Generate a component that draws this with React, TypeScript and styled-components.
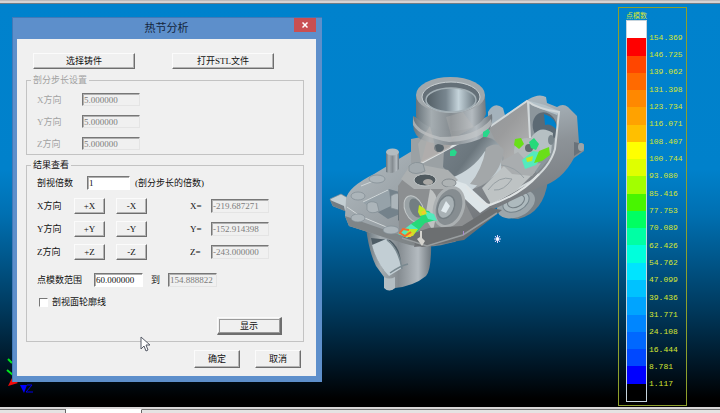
import React from 'react';
import styled, { createGlobalStyle, css } from 'styled-components';

const GlobalStyle = createGlobalStyle`
  * { box-sizing: border-box; }
  body { margin: 0; background: #000; }
  body, button, input {
    font-family: 'Liberation Serif', 'Noto Sans CJK SC', serif;
    font-size: 9px;
    line-height: 12px;
    color: #111;
  }
`;

const Page = styled.div`
  display: flex;
  flex-direction: column;
  height: 100vh;
  min-height: 400px;
  overflow: hidden;
`;

const TopEdge = styled.div`
  flex: none;
  height: 4px;
  background: linear-gradient(#bdbabb 0 1px, #d6d3d3 1px 3px, #6f7c86 3px);
`;

const Scene = styled.main`
  position: relative;
  flex: 1;
  min-height: 0;
  background: linear-gradient(#0082cd 0, #0081cb 41%, #0070b2 52%, #005588 64%, #003658 77%, #00121f 91%, #000 98%);
`;

const TabStrip = styled.nav`
  flex: none;
  display: flex;
  height: 6px;
  border-top: 2px solid #d8d6d6;
  background: #eceaea;
`;

const Tab = styled.span<{ $active?: boolean; $grow?: boolean }>`
  width: ${p => (p.$active ? '76px' : '66px')};
  ${p => p.$grow && css`flex: 1;`}
  border-top: 1px solid ${p => (p.$active ? '#fff' : '#777')};
  border-right: ${p => (p.$grow ? '0' : '1px')} solid #666;
  background: ${p => (p.$active ? '#fff' : '#e5e3e3')};
`;

/* Dialog */

const Dialog = styled.section`
  position: absolute;
  left: 12px;
  top: 13px;
  width: 310px;
  padding: 0 6px 6px 4px;
  background: #5d8fcb;
  border: 1px solid #4279b8;
  border-width: 1px 0 0 1px;
`;

const TitleBar = styled.header`
  display: grid;
  grid-template-columns: 22px 1fr 22px;
  height: 21px;
`;

const Title = styled.h1`
  grid-column: 2;
  margin: 0;
  text-align: center;
  font: 400 11px/19px 'Noto Sans CJK SC', sans-serif;
  color: #14253c;
`;

const CloseButton = styled.button`
  display: grid;
  place-items: center;
  height: 14px;
  padding: 0;
  border: 0;
  background: #c94f52;
`;

const Body = styled.form`
  display: flex;
  flex-direction: column;
  padding: 14px 12px 8px 9px;
  background: #f0f0f0;
`;

const raised = css`
  border: 1px solid;
  border-color: #fbfbfb #6e6e6e #6e6e6e #fbfbfb;
  box-shadow: inset -1px -1px #b4b4b4;
`;

const Button = styled.button<{ $w: number; $h?: number; $default?: boolean }>`
  width: ${p => p.$w}px;
  height: ${p => p.$h ?? 16}px;
  padding: 0;
  line-height: 12px;
  background: #f0f0f0;
  ${raised}
  ${p => p.$default && css`
    outline: 1px solid #999;
    outline-offset: -3px;
    border-width: 1px 2px 2px 1px;
  `}
`;

const FileRow = styled.div`
  display: flex;
  gap: 37px;
  padding-left: 7px;
  margin-bottom: 5px;
`;

const Group = styled.fieldset<{ $muted?: boolean }>`
  display: flex;
  flex-direction: column;
  gap: 9px;
  min-width: 0;
  margin: 0 0 4px;
  padding: 7px 8px 4px 10px;
  border: 1px solid #c3c3c3;
  color: ${p => (p.$muted ? '#a2a2a2' : '#111')};
`;

const ResultGroup = styled(Group)`
  gap: 0;
  margin-bottom: 8px;
  padding-top: 5px;
`;

const Legend = styled.legend`
  margin-left: -6px;
  padding: 0 2px;
  line-height: 12px;
`;

const Row = styled.div<{ $after?: number }>`
  display: flex;
  align-items: center;
  margin-bottom: ${p => p.$after ?? 0}px;
`;

const Axes = styled.div`
  display: flex;
  flex-direction: column;
  gap: 7px;
  margin-bottom: 13px;
`;

const Label = styled.label<{ $w: number; $pad?: number }>`
  width: ${p => p.$w}px;
  padding-left: ${p => p.$pad ?? 0}px;
  flex: none;
  white-space: nowrap;
`;

const Name = styled.span<{ $w: number; $pad?: number }>`
  width: ${p => p.$w}px;
  padding-left: ${p => p.$pad ?? 0}px;
  flex: none;
  white-space: nowrap;
`;

const Field = styled.input<{ $w: number }>`
  width: ${p => p.$w}px;
  height: 14px;
  padding: 0 0 0 1px;
  border: 1px solid;
  border-color: #777 #fff #fff #777;
  box-shadow: inset 1px 1px #b0b0b0;
  border-radius: 0;
  background: #fff;
  line-height: 12px;
  &:disabled { background: #f0f0f0; color: #7c7c7c; border-color: #777 #e4e4e4 #e4e4e4 #777; }
`;

const StepField = styled(Field)`
  height: 13px;
`;

const Pair = styled.div`
  display: flex;
  gap: 11px;
  width: 116px;
`;

const Check = styled.input`
  appearance: none;
  width: 9px;
  height: 9px;
  margin: 0 4px 0 2px;
  border: 1px solid;
  border-color: #777 #fff #fff #777;
  background: #fff;
`;

const ShowRow = styled(Row)`
  justify-content: flex-end;
  padding-right: 13px;
  margin-bottom: 2px;
`;

const Footer = styled.footer`
  display: flex;
  justify-content: flex-end;
  gap: 15px;
  padding-right: 3px;
`;

/* Colour scale */

const Scale = styled.aside`
  position: absolute;
  top: 3px;
  right: 33px;
  bottom: 1px;
  width: 69px;
  display: flex;
  flex-direction: column;
  padding: 2px 2px 3px 7px;
  border: 1px solid #8e9f2c;
  color: #d6e632;
`;

const ScaleTitle = styled.h2`
  margin: 0;
  font: 400 7px/10px 'Noto Sans CJK SC', sans-serif;
`;

const ScaleBody = styled.div`
  flex: 1;
  display: flex;
  gap: 2px;
  min-height: 0;
`;

const Swatches = styled.div`
  display: flex;
  flex-direction: column;
  width: 21px;
  border: 1px solid #c6d4dd;
`;

const Swatch = styled.i<{ $c: string }>`
  flex: 1;
  background: ${p => p.$c};
`;

const Ticks = styled.ol`
  display: flex;
  flex-direction: column;
  margin: 9px 0;
  padding: 0;
  list-style: none;
  font: 8px/8px 'Liberation Mono', monospace;
`;

const Tick = styled.li`
  flex: 1;
  display: flex;
  align-items: center;
`;

/* Drawings lying on the canvas */

const Model = styled.svg`
  position: absolute;
  left: 325px;
  top: 66px;
  width: 265px;
  height: 230px;
`;

const Triad = styled.svg`
  position: absolute;
  left: 4px;
  top: 352px;
  width: 36px;
  height: 40px;
`;

const Pointer = styled.svg`
  position: absolute;
  left: 139px;
  top: 332px;
  width: 13px;
  height: 16px;
`;

const COLORS = [
  '#ffffff', '#ff0000', '#ff4600', '#ff6a00', '#ff8800', '#ffa200', '#ffbf00', '#ffff00',
  '#dfff00', '#a2ff00', '#48f500', '#00ff62', '#00ffa4', '#00ffdc', '#00e4ff', '#00c2ff',
  '#00a4ff', '#0086ff', '#0068ff', '#0048ff', '#0000ff', '#000000',
];

const VALUES = [
  '154.369', '146.725', '139.062', '131.398', '123.734', '116.071', '108.407',
  '100.744', '93.080', '85.416', '77.753', '70.089', '62.426', '54.762',
  '47.099', '39.436', '31.771', '24.108', '16.444', '8.781', '1.117',
];

const AXES = [
  { axis: 'X', value: '-219.687271' },
  { axis: 'Y', value: '-152.914398' },
  { axis: 'Z', value: '-243.000000' },
];

function Casting() {
  return (
    <Model viewBox="325 70 265 230" role="img" aria-label="铸件">
      <defs>
        <linearGradient id="tube">
          <stop offset="0" stopColor="#69747b" />
          <stop offset=".22" stopColor="#a5adb1" />
          <stop offset=".5" stopColor="#858c91" />
          <stop offset=".8" stopColor="#b4bbc0" />
          <stop offset="1" stopColor="#70787e" />
        </linearGradient>
        <linearGradient id="bore">
          <stop offset="0" stopColor="#525e65" />
          <stop offset=".4" stopColor="#78868f" />
          <stop offset=".65" stopColor="#c4d3da" />
          <stop offset="1" stopColor="#68757d" />
        </linearGradient>
        <linearGradient id="plate" x2="1" y2="1">
          <stop offset="0" stopColor="#b4bdc2" />
          <stop offset=".5" stopColor="#9aa2a7" />
          <stop offset="1" stopColor="#84898d" />
        </linearGradient>
        <linearGradient id="wall" x2="1" y2="1">
          <stop offset="0" stopColor="#8a9298" />
          <stop offset=".5" stopColor="#9b9c9d" />
          <stop offset="1" stopColor="#c4c5c5" />
        </linearGradient>
        <linearGradient id="side" y2="1" x2=".2">
          <stop offset="0" stopColor="#bac8d0" />
          <stop offset=".45" stopColor="#8d9398" />
          <stop offset="1" stopColor="#6c6f73" />
        </linearGradient>
        <linearGradient id="hollow" x2="1" y2=".6">
          <stop offset="0" stopColor="#77828a" />
          <stop offset=".5" stopColor="#6b767d" />
          <stop offset="1" stopColor="#c3cdd2" />
        </linearGradient>
      </defs>

      {/* lower pipes */}
      <path fill="url(#tube)" d="M366 228 Q369 252 376 266 L384 277 V287 Q389 293 395 288 Q414 286 426 276 Q432 270 431 236Z" />
      <path fill="#4e5c65" d="M371 238 Q374 257 384 270 L400 268 Q403 250 390 240Z" />
      <path fill="#c2ced4" d="M372 245 L386 239 Q397 245 402 268 L389 276 Q377 264 372 245Z" />
      <path fill="none" stroke="#7a8990" strokeWidth="1.500" d="M387 240 Q399 249 402 269 M390 273 Q400 266 408 264" />
      <path fill="#b4bec3" d="M384 277 Q389 280 395 277 V288 Q389 293 384 288Z" />
      <path fill="#788187" d="M498 208 Q505 219 518 219 Q544 213 548 180 L515 178Z" />
      <ellipse cx="516" cy="204" rx="20" ry="13" fill="#9ca6ab" transform="rotate(-25 516 204)" />
      <ellipse cx="516" cy="202" rx="14" ry="9" fill="#aebabe" stroke="#75838a" transform="rotate(-28 516 202)" />
      <ellipse cx="516" cy="201" rx="9" ry="6" fill="none" stroke="#737e84" transform="rotate(-28 516 201)" />

      {/* base plate */}
      <path fill="#c3ced3" stroke="#7b8a93" strokeWidth=".7" d="M330 199 L341 194 L348 198 L352 206 L346 211 L333 206Z" />
      <path fill="#737d84" d="M330 200 L344 206 L345 211 L333 206Z" />
      <path fill="url(#plate)" d="M346 199 Q348 187 374 174 L412 151 L440 157 L455 239 Q430 252 396 241 L349 226 L345 216Z" />
      <path fill="#7f8588" d="M345 216 L397 234 Q430 241 455 233 L456 241 Q426 252 396 241 L349 226Z" />
      <path fill="#74828b" d="M363 202 L389 189 L403 193 L400 214 L388 219Z" />
      <path fill="#96a2a9" d="M363 202 L389 189 L391 206 L376 213Z" />
      <path fill="none" stroke="#d1d7d9" d="M347 207 L360 216 L396 231 M361 186 L381 178 M363 202 L388 190" />
      <g fill="#acb5ba" stroke="#818c93" strokeWidth=".7">
        <ellipse cx="358" cy="196" rx="7" ry="4" />
        <ellipse cx="377" cy="179" rx="8" ry="4" />
        <ellipse cx="358" cy="218" rx="7" ry="4" />
        <ellipse cx="391" cy="230" rx="8" ry="4" />
        <path d="M367 204 Q370 200 377 203 L379 211 Q371 215 367 210Z" />
        <path d="M391 196 Q397 191 402 196 V211 L391 208Z" />
      </g>
      <path fill="#58666f" d="M398 190 L402 188 V224 L398 220Z" />
      <path fill="url(#tube)" d="M386 152 V172 Q393 175 399 169 V152Z" />
      <ellipse cx="392.500" cy="152" rx="6.500" ry="3.500" fill="#b3bcc0" />

      {/* right housing */}
      <path fill="#a4b2bb" d="M488 112 Q494 101 503 108 L506 119 L488 126Z" />
      <path fill="url(#side)" d="M488 127 L529 99 Q539 93 546 97 L547 103 L557 107 Q563 103 568 107 L577 116 L579 143 L584 144 V151 L574 158 Q562 181 540 187 L492 210 L450 243 L414 247 L427 193Z" />
      <path fill="url(#wall)" d="M488 128 L527 101 L530 139 L516 153 L504 172 L469 190 L455 145Z" />
      <path fill="#8c969c" d="M530 103 L559 115 L554 153 L537 173 L518 161 L530 139Z" />
      <path fill="#b3c1c8" d="M530 101 L545 105 L559 111 L557 115 L531 105Z" />
      <ellipse cx="545" cy="127" rx="12" ry="15" fill="#5c6a74" transform="rotate(-18 545 127)" />
      <path fill="#0081ca" d="M544 114 Q557 118 557 130 Q550 123 545 125Z" />
      <path fill="#b6c0c3" d="M533 135 Q541 125 553 133 L551 153 L524 165 L516 156Z" />
      <ellipse cx="551" cy="140" rx="3" ry="5" fill="#7a868c" />
      <path fill="none" stroke="#d2d8da" strokeWidth="2" d="M488 128 L527 101 Q538 109 559 112 L555 149 Q550 167 530 182 L490 204 M528 102 L530 138" />
      <path fill="#69727a" d="M574 142 L583 144 V150 L574 156Z" />
      <ellipse cx="581" cy="147" rx="3" ry="4" fill="#9da5a9" />
      <ellipse cx="527" cy="151" rx="13" ry="13" fill="#b4babb" />
      <ellipse cx="529" cy="148" rx="4" ry="4" fill="#626d71" />

      {/* central webs */}
      <path fill="#9ba1a4" d="M411 139 L487 124 L504 158 Q496 184 469 190 L451 197 L411 184Z" />
      <path fill="url(#hollow)" d="M444 150 L474 137 Q496 134 502 151 L501 170 Q480 191 456 181 L443 167Z" />
      <path fill="#cbd5da" d="M451 178 Q473 170 485 151 Q493 162 487 177 L472 190 L454 185Z" />
      <path fill="#a3a7a9" d="M486 148 Q497 140 504 150 Q500 176 480 186 L470 184 Q482 170 486 148Z" />
      <path fill="#dde5e8" d="M450 179 L466 184 L490 206 L480 213 L452 187Z" />
      <path fill="#bec3c4" d="M482 188 L506 164 L535 172 L516 191 L491 204Z" />
      <path fill="#a9adaf" d="M500 162 L518 152 L529 164 L541 163 L532 176 L512 174Z" />
      <path fill="none" stroke="#e0e4e5" strokeWidth="2" d="M421 163 L470 137 M466 186 Q479 204 490 205 Q522 194 539 174" />
      <path fill="none" stroke="#979fa3" d="M488 190 Q499 175 512 179 Q504 191 494 190 M501 165 Q516 167 524 178" />
      <path fill="#aaa6a3" d="M421 163 L430 128 L435 151 L444 133 L456 132 L450 148Z" opacity=".75" />
      <ellipse cx="439" cy="148" rx="5" ry="4" fill="#58646b" />

      {/* front housing */}
      <path fill="#8c8f91" d="M398 186 L410 169 L447 180 L460 193 L474 220 L455 242 L421 246 L399 232Z" />
      <path fill="#acb0b1" d="M401 179 L412 163 L448 170 L458 180 L446 189 L414 189Z" />
      <path fill="#a2aaae" stroke="#8a9499" d="M409 166 Q415 160 423 164 L425 171 Q415 176 409 171Z" />
      <ellipse cx="425" cy="180" rx="11" ry="6" fill="#505a5f" stroke="#c1c6c7" />
      <ellipse cx="428" cy="182" rx="5" ry="3" fill="#aaa9a6" />
      <ellipse cx="449" cy="183" rx="7" ry="4" fill="#aeb3b4" stroke="#858c90" />
      <ellipse cx="414" cy="209" rx="9" ry="14" fill="#9aa2a5" stroke="#c3c8c9" transform="rotate(-24 414 209)" />
      <ellipse cx="416" cy="208" rx="6" ry="10" fill="#737e82" transform="rotate(-24 416 208)" />
      <path fill="#bfc2c2" d="M430 189 Q437 192 438 207 L433 231 L425 218Z" />
      <ellipse cx="449" cy="207" rx="14" ry="20" fill="#868d91" stroke="#abb0b2" strokeWidth="3" transform="rotate(20 449 207)" />
      <ellipse cx="446" cy="207" rx="8" ry="12" fill="#a8b1b5" stroke="#757e83" strokeWidth="1.500" transform="rotate(22 446 207)" />
      <path fill="#e1eaee" d="M441 211 L446 201 L450 206 L446 213Z" />
      <path fill="#6c6f71" d="M402 237 L429 228 L462 226 L491 208 L502 210 L464 240 L422 247Z" />
      <path fill="none" stroke="#999ea0" strokeWidth="1.500" d="M402 238 L427 246 L463 235 L497 213" />
      <path fill="#d4d3ce" d="M417 239 L420 237 V231 H422 V238 L425 241 L422 246Z" />

      {/* collar */}
      <path fill="url(#tube)" d="M413 116 Q411 132 420 139 Q450 151 480 139 Q494 131 492 114 Q453 137 413 116Z" />
      <path fill="#c4c8c9" d="M413 116 Q414 131 440 137 Q477 137 491 119 L492 124 Q481 141 449 142 Q420 137 413 125Z" opacity=".65" />
      <path fill="url(#tube)" d="M416 95 V117 Q429 132 454 131 Q481 129 486 114 L485 95Z" />
      <ellipse cx="450.500" cy="95" rx="34.500" ry="18" fill="#a1a8ac" />
      <ellipse cx="451" cy="97" rx="29" ry="15" fill="#657078" stroke="#c9d0d3" />
      <ellipse cx="451" cy="100" rx="25" ry="12" fill="url(#bore)" stroke="#a4b0b6" strokeWidth="1.500" />
      <path fill="#c4c0bc" d="M418 144 L430 126 L437 153 L421 163Z" opacity=".35" />
      <path fill="#c4c0bc" d="M446 117 L463 112 L474 127 L452 139Z" opacity=".25" />

      {/* hot spots */}
      <path fill="#28d78b" d="M450 151 L454 149 L457 152 L455 156 H450Z M483 132 L488 129 L490 132 L487 137 H483Z" />
      <path fill="#26d979" d="M411 224 L420 218 L423 210 L429 211 L436 220 L425 223 L417 232 L410 230Z M529 142 L534 138 L539 144 L536 150 L531 148Z" />
      <path fill="#54eabd" d="M398 234 L411 224 L418 229 L407 238Z M424 211 L434 214 L437 221 L428 219Z M522 160 L533 151 L545 153 L536 165 L525 169Z" />
      <path fill="#c3e724" d="M419 205 L425 209 L427 214 L420 216 L418 212Z M409 229 L418 229 L413 236 H405Z M526 158 L533 156 L532 161 L527 162Z" />
      <path fill="#69df18" d="M515 139 L521 138 L524 144 L519 149 L514 145Z M539 151 L549 147 L550 155 L542 161 L534 163Z" />
      <path fill="#f0cb2e" d="M421 212 L425 210 L426 213 L423 215Z M409 234 L414 232 L411 237 L405 237Z" />
      <path fill="none" stroke="#f06b2f" strokeWidth="2" d="M409 230 L403 229 L400 233 L405 236 L411 232" />

      <path stroke="#dfd4ff" d="M494 239 H501 M497.500 235 V243 M495 236 L500 242 M500 236 L495 242" />
      <circle cx="497.500" cy="239" r="1.500" fill="#fff" />
      <path stroke="#a889cb" d="M463.500 231 V235" />
    </Model>
  );
}

export default function App() {
  return (
    <Page>
      <GlobalStyle />
      <TopEdge />
      <Scene>
        <Casting />
        <Triad viewBox="4 356 36 40" aria-hidden="true">
          <path d="M8 359 L12 363 M7 370 L13 375" stroke="#00e51c" strokeWidth="2" />
          <path d="M8 386 L12 378 L18 383Z" fill="#f00b0b" />
          <path d="M20 385 H27 L24 393Z" fill="#0000ff" />
          <path d="M27 385 H32 L26 392 H33" stroke="#0000e8" fill="none" />
        </Triad>

        <Dialog role="dialog" aria-labelledby="title">
          <TitleBar>
            <Title id="title">热节分析</Title>
            <CloseButton type="button" aria-label="关闭">
              <svg width="6" height="6" viewBox="0 0 6 6">
                <path d="M.5 .5 L5.500 5.500 M5.500 .5 L.5 5.500" stroke="#fff" strokeWidth="1.500" />
              </svg>
            </CloseButton>
          </TitleBar>
          <Body onSubmit={e => e.preventDefault()}>
            <FileRow>
              <Button type="button" $w={102}>选择铸件</Button>
              <Button type="button" $w={102}>打开STL文件</Button>
            </FileRow>

            <Group $muted>
              <Legend>剖分步长设置</Legend>
              {AXES.map(({ axis }) => (
                <Row key={axis}>
                  <Label $w={45} htmlFor={`step${axis}`}>{axis}方向</Label>
                  <StepField $w={58} id={`step${axis}`} defaultValue="5.000000" disabled />
                </Row>
              ))}
            </Group>

            <ResultGroup>
              <Legend>结果查看</Legend>
              <Row $after={8}>
                <Label $w={50} htmlFor="factor">剖视倍数</Label>
                <Field $w={43} id="factor" defaultValue="1" />
                <Name $w={80} $pad={5}>(剖分步长的倍数)</Name>
              </Row>
              <Axes>
                {AXES.map(({ axis, value }) => (
                  <Row key={axis}>
                    <Name $w={37}>{axis}方向</Name>
                    <Pair>
                      <Button type="button" $w={31}>+{axis}</Button>
                      <Button type="button" $w={31}>-{axis}</Button>
                    </Pair>
                    <Label $w={21} htmlFor={`pos${axis}`}>{axis}=</Label>
                    <Field $w={58} id={`pos${axis}`} defaultValue={value} disabled />
                  </Row>
                ))}
              </Axes>
              <Row $after={9}>
                <Label $w={57} htmlFor="from">点模数范围</Label>
                <Field $w={49} id="from" defaultValue="60.000000" />
                <Label $w={25} $pad={8} htmlFor="to">到</Label>
                <Field $w={49} id="to" defaultValue="154.888822" disabled />
              </Row>
              <Row $after={9}>
                <Check type="checkbox" id="outline" />
                <Label $w={60} htmlFor="outline">剖视面轮廓线</Label>
              </Row>
              <ShowRow>
                <Button type="button" $w={65} $h={18} $default>显示</Button>
              </ShowRow>
            </ResultGroup>

            <Footer>
              <Button type="submit" $w={46} $h={18}>确定</Button>
              <Button type="button" $w={46} $h={18}>取消</Button>
            </Footer>
          </Body>
        </Dialog>

        <Scale>
          <ScaleTitle>点模数</ScaleTitle>
          <ScaleBody>
            <Swatches>{COLORS.map(c => <Swatch key={c} $c={c} />)}</Swatches>
            <Ticks>{VALUES.map(v => <Tick key={v}>{v}</Tick>)}</Ticks>
          </ScaleBody>
        </Scale>

        <Pointer viewBox="0 0 13 16" aria-hidden="true">
          <path d="M2 1 V13 L5 10 L7 15 L9 14 L7 9 H11Z" fill="#fff" stroke="#555a66" />
        </Pointer>
      </Scene>
      <TabStrip>
        <Tab />
        <Tab $active />
        <Tab $grow />
      </TabStrip>
    </Page>
  );
}
